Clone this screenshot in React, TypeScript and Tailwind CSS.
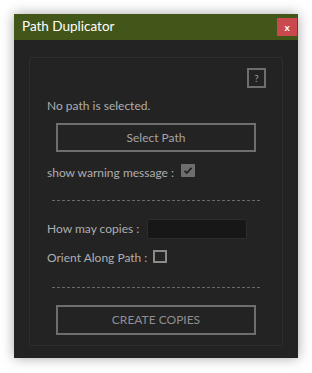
import React from "react";

const font = { fontFamily: 'Lato, "Open Sans", "Liberation Sans", sans-serif' };

export default function App() {
  return (
    <div className="w-[312px] h-[373px] bg-white pt-[14px] pl-[14px]" style={font}>
      <div className="w-[284px] h-[344px] bg-[#232323] shadow-[0_0_12px_rgba(0,0,0,0.35)] flex flex-col">
        <div className="h-[26px] bg-[#43561a] flex items-center pl-[8px] pr-[1px]">
          <span className="text-[13.5px] text-white leading-none">Path Duplicator</span>
          <div className="ml-auto w-[20px] h-[18px] bg-[#c9494f] flex items-center justify-center text-white text-[10px] font-bold leading-none pb-[1px]">
            x
          </div>
        </div>
        <div className="flex-1 pt-[17px] px-[15px] pb-[12px]">
          <div className="h-full border border-[#2e2e2e] rounded-[2px] text-[12px] text-[#aeaeb0] leading-[16px]">
            <div className="flex justify-end pt-[10px] pr-[16px]">
              <div className="w-[19px] h-[20px] border-2 border-[#6e6e6e] flex items-center justify-center text-[10px] text-[#9a9aa6] leading-none">
                ?
              </div>
            </div>
            <div className="mt-[10px] pl-[17px] h-[16px]">No path is selected.</div>
            <div className="mt-[9px] ml-[26px] w-[200px] h-[29px] border-2 border-[#6e6e6e] flex items-center justify-center text-[#a4a4a8]">
              Select Path
            </div>
            <div className="mt-[13px] pl-[17px] h-[16px] flex items-start">
              <span className="w-[134px] whitespace-nowrap">show warning message :</span>
              <div className="-mt-[1px] w-[14px] h-[13px] bg-[#6e6e6e] rounded-[1px] flex items-center justify-center">
                <svg width="10" height="9" viewBox="0 0 10 9">
                  <path d="M1.5 4.8 L3.8 7 L8.5 1.8" fill="none" stroke="#222" strokeWidth="1.8" />
                </svg>
              </div>
            </div>
            <div className="mt-[19px] ml-[22px] w-[208px] border-t border-dashed border-[#6a6a6a]"></div>
            <div className="mt-[18px] pl-[17px] flex items-center h-[20px]">
              <span className="w-[100px] whitespace-nowrap">How may copies :</span>
              <div className="w-[100px] h-[20px] bg-[#171717] border border-[#2c2c2c] rounded-[2px]"></div>
            </div>
            <div className="mt-[11px] pl-[17px] h-[16px] flex items-start">
              <span className="w-[106px] whitespace-nowrap">Orient Along Path :</span>
              <div className="w-[14px] h-[13px] border-2 border-[#8a8a8a]"></div>
            </div>
            <div className="mt-[21px] ml-[22px] w-[208px] border-t border-dashed border-[#6a6a6a]"></div>
            <div className="mt-[17px] ml-[26px] w-[200px] h-[30px] border-2 border-[#6e6e6e] flex items-center justify-center text-[#8e8e94]">
              CREATE COPIES
            </div>
          </div>
        </div>
      </div>
    </div>
  );
}
